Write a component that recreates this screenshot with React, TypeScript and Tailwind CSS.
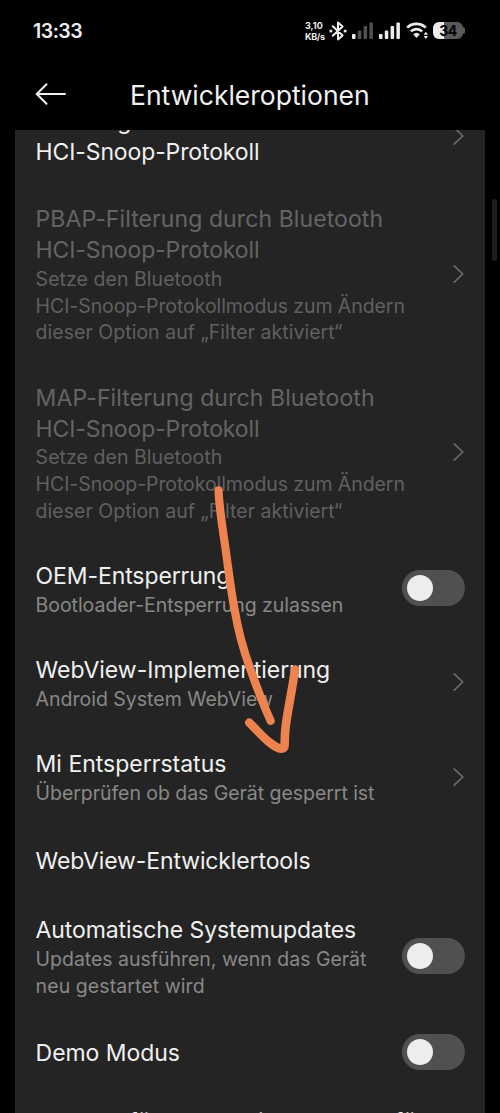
interface Line {
  text: string;
  tracking?: string;
}

interface Setting {
  title: Line[];
  summary?: Line[];
  control?: 'link' | 'switch';
  disabled?: boolean;
}

const BLUETOOTH_SUMMARY: Line[] = [
  { text: 'Setze den Bluetooth', tracking: 'tracking-[0.05px]' },
  { text: 'HCI-Snoop-Protokollmodus zum Ändern', tracking: 'tracking-[-0.08px]' },
  { text: 'dieser Option auf „Filter aktiviert“', tracking: 'tracking-[0.03px]' },
];

const SETTINGS: Setting[] = [
  {
    title: [
      { text: 'Filterung durch Bluetooth' },
      { text: 'HCI-Snoop-Protokoll', tracking: 'tracking-[-0.12px]' },
    ],
    control: 'link',
  },
  {
    title: [
      { text: 'PBAP-Filterung durch Bluetooth', tracking: 'tracking-[0.09px]' },
      { text: 'HCI-Snoop-Protokoll', tracking: 'tracking-[-0.12px]' },
    ],
    summary: BLUETOOTH_SUMMARY,
    control: 'link',
    disabled: true,
  },
  {
    title: [
      { text: 'MAP-Filterung durch Bluetooth', tracking: 'tracking-[0.11px]' },
      { text: 'HCI-Snoop-Protokoll', tracking: 'tracking-[-0.12px]' },
    ],
    summary: BLUETOOTH_SUMMARY,
    control: 'link',
    disabled: true,
  },
  {
    title: [{ text: 'OEM-Entsperrung', tracking: 'tracking-[-0.1px]' }],
    summary: [
      { text: 'Bootloader-Entsperrung zulassen', tracking: 'tracking-[-0.04px]' },
    ],
    control: 'switch',
  },
  {
    title: [{ text: 'WebView-Implementierung' }],
    summary: [{ text: 'Android System WebView' }],
    control: 'link',
  },
  {
    title: [{ text: 'Mi Entsperrstatus' }],
    summary: [
      { text: 'Überprüfen ob das Gerät gesperrt ist', tracking: 'tracking-[-0.05px]' },
    ],
    control: 'link',
  },
  {
    title: [{ text: 'WebView-Entwicklertools', tracking: 'tracking-[-0.12px]' }],
  },
  {
    title: [
      { text: 'Automatische Systemupdates', tracking: 'tracking-[-0.12px]' },
    ],
    summary: [
      { text: 'Updates ausführen, wenn das Gerät', tracking: 'tracking-[-0.02px]' },
      { text: 'neu gestartet wird', tracking: 'tracking-[0.08px]' },
    ],
    control: 'switch',
  },
  {
    title: [{ text: 'Demo Modus', tracking: 'tracking-[-0.05px]' }],
    control: 'switch',
  },
  {
    title: [
      { text: 'Kacheln für Schnelleinstellungen für', tracking: 'tracking-[-0.1px]' },
      { text: 'Entwickler' },
    ],
    control: 'link',
  },
];

function SignalIcon({ level }: { level: number }) {
  const heights = [5, 8.5, 13, 16.5];
  return (
    <svg aria-hidden="true" viewBox="0 0 21 17" className="h-[17px] w-[21px]">
      {heights.map((height, i) => (
        <rect
          key={height}
          x={i * 5.8}
          y={17 - height}
          width="3.5"
          height={height}
          rx="1"
          fill={i < level ? '#ededed' : '#505050'}
        />
      ))}
    </svg>
  );
}

function StatusBar() {
  return (
    <div className="flex h-[60px] items-center justify-between pt-px pr-[35px] pl-[33px] text-[#ededed]">
      <span className="mt-0.5 text-[19.5px] font-semibold tracking-[-0.5px]">13:33</span>
      <div className="flex items-center">
        <div className="w-6 text-[9px] leading-[11px] font-bold">
          <p>3,10</p>
          <p className="tracking-[-0.3px]">KB/s</p>
        </div>
        <svg
          aria-hidden="true"
          viewBox="0 0 18 20"
          className="mr-[5px] h-5 w-[18px]"
          fill="none"
        >
          <path
            d="M3.8 5.2 13.6 14.4 9 18.4V1.6l4.6 4L3.8 14.8"
            stroke="currentColor"
            strokeWidth="2"
            strokeLinejoin="round"
            strokeLinecap="round"
          />
          <circle cx="1.9" cy="10" r="1.5" fill="currentColor" />
          <circle cx="16.1" cy="10" r="1.5" fill="currentColor" />
        </svg>
        <SignalIcon level={1} />
        <span className="w-[6px]" />
        <SignalIcon level={4} />
        <svg
          aria-hidden="true"
          viewBox="0 0 23 17"
          className="mr-[4px] ml-[6px] h-[17px] w-[23px]"
          fill="none"
        >
          <path
            d="M1.2 5.6a13.4 13.4 0 0 1 18.6 0M4.9 9.4a8 8 0 0 1 11.2 0"
            stroke="currentColor"
            strokeWidth="2.7"
          />
          <path
            d="M7.2 12.3a4.9 4.9 0 0 1 6.6 0L10.5 16Z"
            fill="currentColor"
          />
          <path d="m17.6 12.8 2.2-3 2.2 3ZM17.6 14l2.2 3 2.2-3Z" fill="currentColor" />
        </svg>
        <div className="flex items-center">
          <div className="flex h-[17px] w-[30px] items-center justify-center rounded-[6px] bg-linear-to-r from-[#ededed] from-36% to-[#5a5a5a] to-36% text-[14px] font-bold tracking-[-0.5px] text-black">
            34
          </div>
          <span className="h-[7px] w-[2px] rounded-r-sm bg-[#5a5a5a]" />
        </div>
      </div>
    </div>
  );
}

function Chevron() {
  return (
    <svg
      aria-hidden="true"
      viewBox="0 0 12 20"
      className="h-5 w-3 shrink-0"
      fill="none"
    >
      <path
        d="m1.2 1.8 8.6 8.2-8.6 8.2"
        stroke="#6c6c6c"
        strokeWidth="1.7"
        strokeLinecap="round"
        strokeLinejoin="round"
      />
    </svg>
  );
}

function Switch() {
  return (
    <button
      type="button"
      role="switch"
      aria-checked="false"
      className="flex h-9 w-[63px] shrink-0 items-center rounded-full bg-[#505050] pl-[5px]"
    >
      <span className="h-[26px] w-[26px] rounded-full bg-[#ededed]" />
    </button>
  );
}

function SettingRow({ title, summary, control, disabled }: Setting) {
  return (
    <li className="flex min-h-[72px] shrink-0 items-center justify-between py-[16.8px] pr-[19.5px] pl-[20.2px] last:-mt-[1.6px]">
      <div className="mt-[3px] whitespace-nowrap">
        <h2
          className={`text-[23px] leading-[30.8px] ${disabled ? 'text-[#646464]' : 'text-[#f0f0f0]'}`}
        >
          {title.map((line) => (
            <span key={line.text} className={`block ${line.tracking ?? ''}`}>
              {line.text}
            </span>
          ))}
        </h2>
        {summary && (
          <p
            className={`text-[19.5px] leading-[26.7px] ${disabled ? 'text-[#606060]' : 'text-[#888888]'}`}
          >
            {summary.map((line) => (
              <span key={line.text} className={`block ${line.tracking ?? ''}`}>
                {line.text}
              </span>
            ))}
          </p>
        )}
      </div>
      {control === 'link' && <Chevron />}
      {control === 'switch' && <Switch />}
    </li>
  );
}

function ArrowAnnotation() {
  return (
    <svg
      aria-hidden="true"
      viewBox="240 480 64 280"
      className="pointer-events-none absolute top-[480px] left-[240px] h-[280px] w-16 overflow-visible"
      fill="none"
      stroke="#ee8350"
      strokeLinecap="round"
      strokeLinejoin="round"
    >
      <path
        d="M218.6 490.3C219 505 221.5 522 225 545C229 573 231 592 234.5 609C238 630 241.5 645 250 668C257 688 262 702 270.6 720.7"
        strokeWidth="8.2"
      />
      <path
        d="M249.3 722.6C256 729 262 736.5 269 742C274 746 278.5 748.5 281 748.6C284 749 284.5 747.5 284.6 745C285 738 284.5 734 286 724C288.5 706 292 691 295 669.5"
        strokeWidth="8.6"
      />
    </svg>
  );
}

export default function App() {
  return (
    <div className="relative flex h-screen w-full flex-col overflow-hidden bg-black font-['Inter',sans-serif]">
      <StatusBar />
      <header className="flex h-[69.5px] shrink-0 items-center pl-[35px] text-[#f0f0f0]">
        <svg
          aria-hidden="true"
          viewBox="0 0 32 24"
          className="-mt-0.5 h-6 w-8"
          fill="none"
        >
          <path
            d="M30 12H2M11.5 2.3 1.7 12l9.8 9.7"
            stroke="currentColor"
            strokeWidth="2"
            strokeLinecap="round"
            strokeLinejoin="round"
          />
        </svg>
        <h1 className="ml-[63px] text-[26.5px] leading-8">Entwickleroptionen</h1>
      </header>
      <main className="mr-[15.5px] ml-[15.4px] min-h-0 flex-1 overflow-hidden bg-[#242424]">
        <ul className="-mt-[43px] flex flex-col">
          {SETTINGS.map((setting) => (
            <SettingRow key={setting.title[0].text} {...setting} />
          ))}
        </ul>
      </main>
      <span className="absolute top-[199px] right-[3px] h-[62px] w-[5px] rounded-full bg-[#1e1e1e]" />
      <ArrowAnnotation />
    </div>
  );
}
